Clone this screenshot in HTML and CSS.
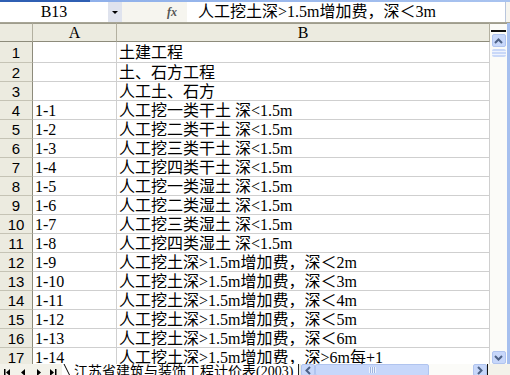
FILE: index.html
```html
<!DOCTYPE html>
<html lang="zh-CN">
<head>
    <meta charset="UTF-8">
    <title>江苏省建筑与装饰工程计价表</title>
    <link rel="stylesheet" href="styles.css">
</head>
<body>
<div class="app">
    <div class="title-strip"></div>
    <div class="formula-bar">
        <div class="name-box">B13</div>
        <div class="name-drop"><span class="tri-down"></span></div>
        <div class="fx">fx</div>
        <div class="formula-input">人工挖土深&gt;1.5m增加费，深＜3m</div>
    </div>

    <div class="main">
        <div class="sheet">
            <div class="corner"></div><div class="col-head">A</div><div class="col-head">B</div>
            <div class="row-head">1</div><div class="cell"></div><div class="cell">土建工程</div>
            <div class="row-head">2</div><div class="cell"></div><div class="cell">土、石方工程</div>
            <div class="row-head">3</div><div class="cell"></div><div class="cell">人工土、石方</div>
            <div class="row-head">4</div><div class="cell">1-1</div><div class="cell">人工挖一类干土 深&lt;1.5m</div>
            <div class="row-head">5</div><div class="cell">1-2</div><div class="cell">人工挖二类干土 深&lt;1.5m</div>
            <div class="row-head">6</div><div class="cell">1-3</div><div class="cell">人工挖三类干土 深&lt;1.5m</div>
            <div class="row-head">7</div><div class="cell">1-4</div><div class="cell">人工挖四类干土 深&lt;1.5m</div>
            <div class="row-head">8</div><div class="cell">1-5</div><div class="cell">人工挖一类湿土 深&lt;1.5m</div>
            <div class="row-head">9</div><div class="cell">1-6</div><div class="cell">人工挖二类湿土 深&lt;1.5m</div>
            <div class="row-head">10</div><div class="cell">1-7</div><div class="cell">人工挖三类湿土 深&lt;1.5m</div>
            <div class="row-head">11</div><div class="cell">1-8</div><div class="cell">人工挖四类湿土 深&lt;1.5m</div>
            <div class="row-head">12</div><div class="cell">1-9</div><div class="cell">人工挖土深&gt;1.5m增加费，深＜2m</div>
            <div class="row-head">13</div><div class="cell">1-10</div><div class="cell">人工挖土深&gt;1.5m增加费，深＜3m</div>
            <div class="row-head">14</div><div class="cell">1-11</div><div class="cell">人工挖土深&gt;1.5m增加费，深＜4m</div>
            <div class="row-head">15</div><div class="cell">1-12</div><div class="cell">人工挖土深&gt;1.5m增加费，深＜5m</div>
            <div class="row-head">16</div><div class="cell">1-13</div><div class="cell">人工挖土深&gt;1.5m增加费，深＜6m</div>
            <div class="row-head">17</div><div class="cell">1-14</div><div class="cell">人工挖土深&gt;1.5m增加费，深&gt;6m每+1</div>
        </div>

        <div class="vscroll">
            <div class="split-box"></div>
            <div class="sb-btn">
                <svg width="9" height="6" viewBox="0 0 9 6"><path d="M1 5 L4.5 1.5 L8 5" fill="none" stroke="#4d6185" stroke-width="2"/></svg>
            </div>
            <div class="v-thumb"></div>
            <div class="v-track"></div>
            <div class="sb-btn">
                <svg width="9" height="6" viewBox="0 0 9 6"><path d="M1 1 L4.5 4.5 L8 1" fill="none" stroke="#4d6185" stroke-width="2"/></svg>
            </div>
        </div>
        <div class="frame"></div>
    </div>

    <div class="bottom-bar">
        <div class="tab-nav">
            <svg width="62" height="12" viewBox="0 0 62 12">
                <rect x="4" y="3" width="1.5" height="7" fill="#000"/>
                <path d="M10 3 L6 6.5 L10 10 Z" fill="#000"/>
                <path d="M25 3 L21 6.5 L25 10 Z" fill="#000"/>
                <path d="M37 3 L41 6.5 L37 10 Z" fill="#000"/>
                <path d="M50 3 L54 6.5 L50 10 Z" fill="#000"/>
                <rect x="55" y="3" width="1.5" height="7" fill="#000"/>
            </svg>
        </div>
        <div class="sheet-tab">
            <svg class="tab-slant" width="8" height="12" viewBox="0 0 8 12"><path d="M1 0 L7 12" stroke="#000" stroke-width="1"/></svg>
            <span class="tab-label">江苏省建筑与装饰工程计价表(2003)</span>
        </div>
        <div class="tab-split"></div>
        <div class="hscroll">
            <div class="sb-btn h">
                <svg width="6" height="9" viewBox="0 0 6 9"><path d="M5 1 L1.5 4.5 L5 8" fill="none" stroke="#4d6185" stroke-width="2"/></svg>
            </div>
            <div class="h-thumb"><span class="grip"></span></div>
            <div class="h-track"></div>
            <div class="sb-btn h">
                <svg width="6" height="9" viewBox="0 0 6 9"><path d="M1 1 L4.5 4.5 L1 8" fill="none" stroke="#4d6185" stroke-width="2"/></svg>
            </div>
        </div>
        <div class="corner-box"></div>
    </div>
</div>
</body>
</html>
```

FILE: styles.css
```css
body {
    margin: 0;
    padding: 0;
    background: #ffffff;
    font-family: "Liberation Serif", "Noto Sans CJK SC", serif;
}
.app {
    width: 510px;
    height: 375px;
    display: flex;
    flex-direction: column;
    overflow: hidden;
    background: #ffffff;
}
.title-strip {
    height: 2px;
    background: linear-gradient(to right, #2f5fb3 0, #2f5fb3 90px, #8fb0ea 90px, #a9c3ef 100%);
    flex: none;
}
.formula-bar {
    height: 20px;
    display: flex;
    align-items: stretch;
    background: #f6f5ef;
    border-bottom: 1px solid #a7a596;
    flex: none;
}
.name-box {
    width: 108px;
    background: #ffffff;
    font-size: 16px;
    line-height: 20px;
    text-align: center;
    color: #000;
}
.name-drop {
    width: 14px;
    background: #dfe3ee;
    display: flex;
    align-items: center;
    justify-content: center;
}
.tri-down {
    width: 0;
    height: 0;
    border-left: 3px solid transparent;
    border-right: 3px solid transparent;
    border-top: 3px solid #000;
}
.fx {
    width: 65px;
    font-family: "Liberation Serif", serif;
    font-style: italic;
    font-weight: bold;
    font-size: 12px;
    line-height: 20px;
    text-align: right;
    padding-right: 10px;
    box-sizing: border-box;
    color: #555;
}
.formula-input {
    flex: 1;
    background: #ffffff;
    font-size: 16px;
    line-height: 20px;
    padding-left: 11px;
    white-space: nowrap;
    overflow: hidden;
    border-right: 1px solid #b9c6dd;
    margin-right: 4px;
}
.main {
    height: 341px;
    display: flex;
    flex: none;
}
.sheet {
    width: 490px;
    display: grid;
    grid-template-columns: 33px 84px 373px;
    grid-template-rows: 19px 21px repeat(16, 19px);
    overflow: hidden;
    font-size: 16px;
    line-height: 19px;
}
.sheet > div {
    box-sizing: border-box;
    white-space: nowrap;
    overflow: hidden;
}
.corner, .col-head {
    background: #ecebe0;
    border-top: 1px solid #9e9c8c;
    border-right: 1px solid #b3b0a0;
    border-bottom: 1px solid #8d8b7b;
    text-align: center;
    line-height: 17px;
}
.row-head {
    background: #ecebe0;
    border-right: 1px solid #8d8b7b;
    border-bottom: 1px solid #c5c3b5;
    text-align: center;
    font-family: "Liberation Sans", "Noto Sans CJK SC", sans-serif;
    font-size: 15px;
    line-height: 20px;
}
.cell {
    border-right: 1px solid #cfcfcf;
    border-bottom: 1px solid #cfcfcf;
    padding-left: 2px;
    line-height: 20px;
}
.sheet > div:nth-child(4), .sheet > div:nth-child(5), .sheet > div:nth-child(6) {
    line-height: 22px;
}
.vscroll {
    width: 17px;
    background: #fbfbf8;
    display: flex;
    flex-direction: column;
    align-items: center;
    border-top: 1px solid #9e9c8c;
    box-sizing: border-box;
}
.split-box {
    width: 15px;
    height: 6px;
    border-bottom: 2px solid #111;
    margin-bottom: 2px;
}
.sb-btn {
    width: 14px;
    height: 13px;
    background: #c7d7fa;
    border: 1px solid #b0c4ef;
    border-radius: 2px;
    box-sizing: border-box;
    display: flex;
    align-items: center;
    justify-content: center;
    flex: none;
}
.v-thumb {
    width: 14px;
    height: 8px;
    margin-top: 2px;
    background: repeating-linear-gradient(to bottom, #c9d8f8 0, #c9d8f8 2px, #eef3fd 2px, #eef3fd 3px);
    border-radius: 2px;
    flex: none;
}
.v-track {
    flex: 1;
}
.frame {
    width: 3px;
    background: #a6bfee;
}
.bottom-bar {
    height: 12px;
    display: flex;
    background: #f3f2ea;
    flex: none;
    overflow: hidden;
}
.tab-nav {
    width: 62px;
    flex: none;
}
.sheet-tab {
    width: 236px;
    display: flex;
    flex: none;
    background: #ffffff;
    overflow: hidden;
}
.tab-slant {
    flex: none;
    margin-left: 1px;
}
.tab-label {
    font-size: 14px;
    line-height: 15px;
    padding-left: 3px;
    white-space: nowrap;
}
.tab-split {
    width: 3px;
    border-left: 1px solid #222;
    box-sizing: border-box;
    background: #ecebe0;
    flex: none;
}
.hscroll {
    width: 186px;
    display: flex;
    align-items: flex-start;
    background: #fbfbf8;
    flex: none;
}
.sb-btn.h {
    width: 14px;
    height: 12px;
}
.h-thumb {
    width: 114px;
    height: 12px;
    background: #c7d7fa;
    border: 1px solid #b0c4ef;
    border-radius: 2px;
    box-sizing: border-box;
    display: flex;
    align-items: center;
    justify-content: center;
    flex: none;
}
.grip {
    width: 7px;
    height: 6px;
    background: repeating-linear-gradient(to right, #eef3fd 0, #eef3fd 1px, #9fb5e0 1px, #9fb5e0 2px);
}
.h-track {
    flex: 1;
}
.corner-box {
    flex: 1;
    border-left: 1px solid #111;
    background: #f3f2ea;
}
```
